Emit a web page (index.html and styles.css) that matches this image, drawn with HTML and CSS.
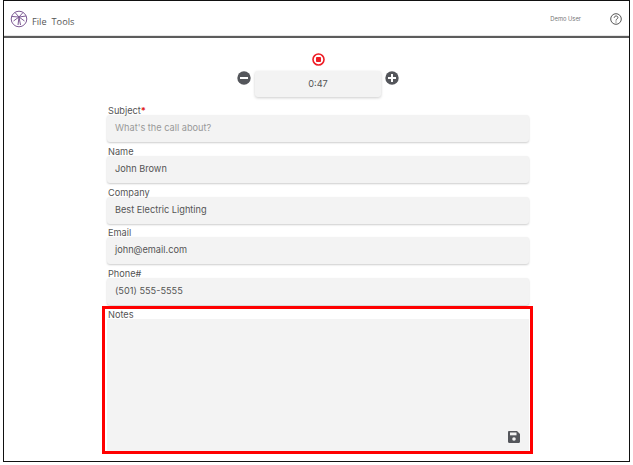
FILE: index.html
```html
<!DOCTYPE html>
<html lang="en">
<head>
    <meta charset="UTF-8">
    <title>Call Notes</title>
    <link rel="stylesheet" href="styles.css">
</head>
<body>
    <div class="frame">
        <header class="topbar">
            <div class="brand">
                <svg class="logo" width="18" height="18" viewBox="0 0 18 18" fill="none" stroke="#7d5a94" stroke-width="1">
                    <circle cx="9" cy="9" r="7.8"/>
                    <path d="M9 7 L5 2.5 M9 7 L2 6.5 M9 7 L13 2.5 M9 7 L16 6 M9 7 L3.5 11 M9 7 L14.5 11 M9 7 L8 15 M9 7 L10.5 15"/>
                </svg>
                <span class="menu-item">File</span>
                <span class="menu-item">Tools</span>
            </div>
            <div class="user-area">
                <span class="user-name">Demo User</span>
                <svg width="12" height="12" viewBox="0 0 12 12" fill="none" stroke="#444" stroke-width="0.9">
                    <circle cx="6" cy="6" r="5.3"/>
                    <path d="M4.2 4.8 C4.2 2.4 7.9 2.4 7.9 4.6 C7.9 6 6 5.8 6 7.6"/>
                    <path d="M6 8.5 V9.6"/>
                </svg>
            </div>
        </header>

        <main class="content">
            <div class="timer">
                <svg width="13" height="13" viewBox="0 0 13 13">
                    <circle cx="6.5" cy="6.5" r="5.5" fill="none" stroke="#ee1c25" stroke-width="1.6"/>
                    <rect x="4" y="4" width="5" height="5" rx="0.8" fill="#ee1c25"/>
                </svg>
                <div class="timer-row">
                    <svg width="14" height="14" viewBox="0 0 14 14">
                        <circle cx="7" cy="7" r="6.7" fill="#54565b"/>
                        <rect x="3" y="6" width="8" height="2" fill="#fff"/>
                    </svg>
                    <div class="timer-box">0:47</div>
                    <svg width="14" height="14" viewBox="0 0 14 14">
                        <circle cx="7" cy="7" r="6.7" fill="#54565b"/>
                        <path d="M3 6H6V3H8V6H11V8H8V11H6V8H3Z" fill="#fff"/>
                    </svg>
                </div>
            </div>

            <form class="call-form">
                <label class="field">
                    <span class="field-label">Subject<span class="required">*</span></span>
                    <span class="field-input placeholder">What's the call about?</span>
                </label>
                <label class="field">
                    <span class="field-label">Name</span>
                    <span class="field-input">John Brown</span>
                </label>
                <label class="field">
                    <span class="field-label">Company</span>
                    <span class="field-input">Best Electric Lighting</span>
                </label>
                <label class="field">
                    <span class="field-label">Email</span>
                    <span class="field-input">john@email.com</span>
                </label>
                <label class="field">
                    <span class="field-label">Phone#</span>
                    <span class="field-input">(501) 555-5555</span>
                </label>
                <div class="field notes">
                    <span class="field-label">Notes</span>
                    <div class="notes-box">
                        <svg class="save-icon" width="12" height="12" viewBox="0 0 12 12">
                            <path d="M1.2 0H9L12 3V10.8C12 11.5 11.5 12 10.8 12H1.2C.5 12 0 11.5 0 10.8V1.2C0 .5 .5 0 1.2 0Z" fill="#54565b"/>
                            <rect x="2" y="1.5" width="6.5" height="2.8" fill="#f3f3f3"/>
                            <circle cx="6" cy="8" r="1.8" fill="#f3f3f3"/>
                        </svg>
                    </div>
                    <div class="highlight"></div>
                </div>
            </form>
        </main>
    </div>
</body>
</html>
```

FILE: styles.css
```css
html, body {
    margin: 0;
    background: #fff;
}
body {
    font-family: Inter, "Open Sans", sans-serif;
    color: #555;
    width: 633px;
    height: 465px;
    overflow: hidden;
}
.frame {
    box-sizing: border-box;
    width: 627px;
    height: 462px;
    margin-left: 3px;
    border: 1px solid #111;
}
.topbar {
    box-sizing: border-box;
    height: 37px;
    display: flex;
    justify-content: space-between;
    align-items: flex-start;
    border-bottom: 2px solid #5c5c5c;
    padding: 7px 7px 0 6px;
    box-shadow: 0 -1px 0 #e6e6e6 inset;
}
.brand {
    display: flex;
    align-items: flex-end;
    height: 20px;
}
.logo {
    margin-right: 4px;
}
.menu-item {
    font-family: "Open Sans", sans-serif;
    font-size: 9.2px;
    line-height: 13px;
    margin-right: 5px;
    color: #555;
}
.user-area {
    display: flex;
    align-items: center;
    gap: 29px;
    height: 21px;
}
.user-name {
    font-size: 5.8px;
    color: #777;
}
.content {
    display: flex;
    flex-direction: column;
    align-items: center;
    padding-left: 3px;
}
.timer {
    display: flex;
    flex-direction: column;
    align-items: center;
    padding-top: 15px;
    height: 64px;
    box-sizing: border-box;
    margin-bottom: 3px;
}
.timer-row {
    display: flex;
    align-items: flex-start;
    gap: 4px;
    margin-top: 5px;
}
.timer-box {
    width: 126px;
    height: 26px;
    line-height: 26px;
    text-align: center;
    font-size: 9.2px;
    background: #f3f3f3;
    border-radius: 3px;
    box-shadow: 0 1px 3px rgba(0,0,0,0.2);
}
.call-form {
    width: 422px;
    display: flex;
    flex-direction: column;
}
.field {
    display: block;
    margin-bottom: 3.8px;
}
.field-label {
    display: block;
    font-size: 9.2px;
    line-height: 12px;
    margin-bottom: -2px;
    padding-left: 1px;
}
.required {
    color: #e02020;
    font-weight: bold;
}
.field-input {
    display: block;
    box-sizing: border-box;
    height: 27px;
    line-height: 26px;
    padding-left: 8px;
    font-size: 9.2px;
    background: #f3f3f3;
    border-radius: 3px;
    box-shadow: 0 1px 2px rgba(0,0,0,0.2);
}
.placeholder {
    color: #999;
}
.notes {
    position: relative;
}
.notes-box {
    position: relative;
    height: 132px;
    background: #f3f3f3;
}
.save-icon {
    position: absolute;
    right: 9px;
    bottom: 8px;
}
.highlight {
    position: absolute;
    left: -5px;
    right: -4px;
    top: -3px;
    bottom: -3px;
    border: 3px solid #f00;
}
```
